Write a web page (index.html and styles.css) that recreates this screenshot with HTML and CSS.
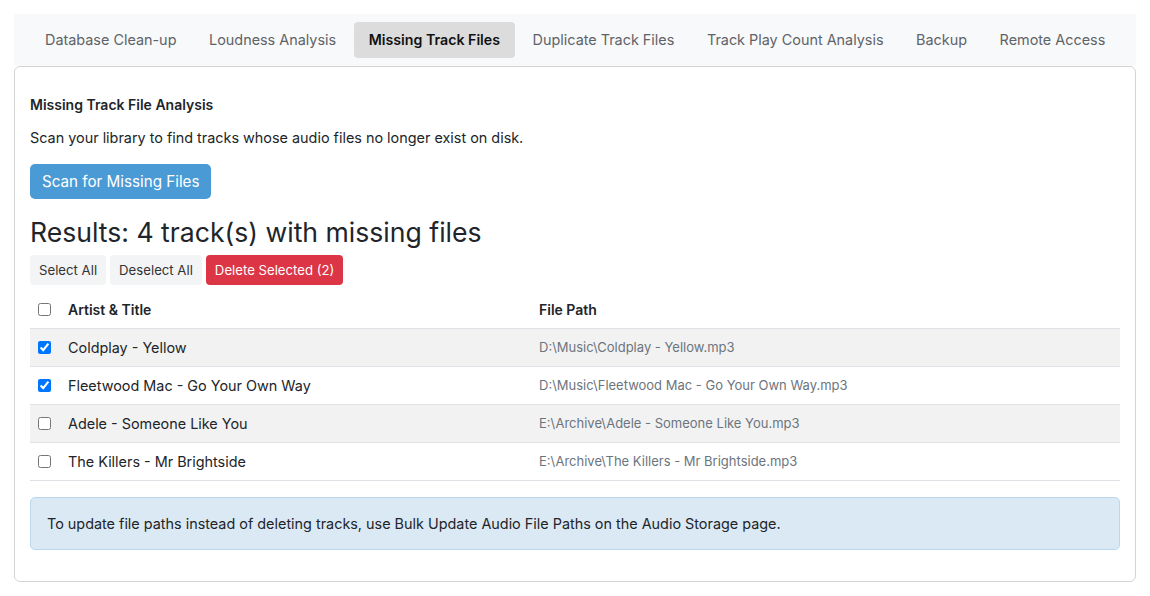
FILE: index.html
```html
<!DOCTYPE html>
<html>
<head>
  <title>Maintenance</title>
  <link rel="stylesheet" href="styles.css">
</head>
<body>
  <ul class="tabs">
    <li class="tab">Database Clean-up</li>
    <li class="tab">Loudness Analysis</li>
    <li class="tab active">Missing Track Files</li>
    <li class="tab">Duplicate Track Files</li>
    <li class="tab">Track Play Count Analysis</li>
    <li class="tab">Backup</li>
    <li class="tab">Remote Access</li>
  </ul>
  <div class="card">
    <h6 class="card-title">Missing Track File Analysis</h6>
    <p class="lead">Scan your library to find tracks whose audio files no longer exist on disk.</p>
    <button class="btn btn-scan" type="button">Scan for Missing Files</button>
    <h3 class="results">Results: 4 track(s) with missing files</h3>
    <div class="actions">
      <button class="btn-sm btn-light" type="button">Select All</button>
      <button class="btn-sm btn-light" type="button">Deselect All</button>
      <button class="btn-sm btn-danger" type="button">Delete Selected (2)</button>
    </div>
    <table class="tracks">
      <thead>
        <tr>
          <th class="col-check"><input type="checkbox"></th>
          <th class="col-title">Artist &amp; Title</th>
          <th>File Path</th>
        </tr>
      </thead>
      <tbody>
        <tr>
          <td class="col-check"><input type="checkbox" checked></td>
          <td>Coldplay - Yellow</td>
          <td class="path">D:\Music\Coldplay - Yellow.mp3</td>
        </tr>
        <tr>
          <td class="col-check"><input type="checkbox" checked></td>
          <td>Fleetwood Mac - Go Your Own Way</td>
          <td class="path">D:\Music\Fleetwood Mac - Go Your Own Way.mp3</td>
        </tr>
        <tr>
          <td class="col-check"><input type="checkbox"></td>
          <td>Adele - Someone Like You</td>
          <td class="path">E:\Archive\Adele - Someone Like You.mp3</td>
        </tr>
        <tr>
          <td class="col-check"><input type="checkbox"></td>
          <td>The Killers - Mr Brightside</td>
          <td class="path">E:\Archive\The Killers - Mr Brightside.mp3</td>
        </tr>
      </tbody>
    </table>
    <div class="alert">To update file paths instead of deleting tracks, use Bulk Update Audio File Paths on the Audio Storage page.</div>
  </div>
</body>
</html>
```

FILE: styles.css
```css
body {
  margin: 0;
  padding: 14px;
  background-color: #fff;
  color: #212529;
  font-family: Inter, "Noto Sans", sans-serif;
  font-size: 14.4px;
}

.tabs {
  display: flex;
  gap: 2.6px;
  list-style: none;
  margin: 0;
  padding: 8px 16px;
  background-color: #f8f9fa;
}

.tab {
  flex-shrink: 0;
  white-space: nowrap;
  padding: 8px 15px;
  font-size: 14.4px;
  line-height: 20px;
  color: #5f6368;
  border-radius: 4px;
}

.tab.active {
  background-color: #dcdcdc;
  color: #111;
  font-size: 14.2px;
  font-weight: 600;
}

.card {
  border: 1px solid #d4d4d4;
  border-radius: 6px;
  padding: 16px 15px 15px;
}

.card-title {
  margin: 12px 0 13px;
  font-size: 14px;
  font-weight: 600;
  line-height: 20px;
}

.lead {
  margin: 0 0 16px;
  font-size: 14.4px;
  line-height: 20px;
}

.btn {
  border: none;
  border-radius: 5px;
  font-family: inherit;
  font-size: 15.2px;
  padding: 8px 12px;
  line-height: 19px;
  cursor: pointer;
}

.btn-scan {
  background-color: #4a9bd5;
  color: #fff;
}

.results {
  margin: 15px 0 5px;
  font-size: 26.6px;
  font-weight: 400;
  line-height: 36px;
}

.actions {
  display: flex;
  gap: 4px;
}

.btn-sm {
  border: none;
  border-radius: 4px;
  font-family: inherit;
  font-size: 13.2px;
  padding: 6px 9px;
  line-height: 18px;
  cursor: pointer;
}

.btn-light {
  background-color: #f3f4f6;
  color: #333;
}

.btn-danger {
  background-color: #dc3545;
  color: #fff;
}

.tracks {
  width: 100%;
  border-collapse: collapse;
  margin-top: 5px;
}

.tracks th,
.tracks td {
  text-align: left;
  padding: 8px;
  line-height: 21px;
  border-bottom: 1px solid #dee2e6;
}

.tracks th {
  font-size: 14px;
  font-weight: 600;
  padding-top: 9px;
  padding-bottom: 8px;
}

.tracks tbody tr:nth-child(odd) {
  background-color: #f2f2f2;
}

.tracks .col-check {
  width: 14px;
}

.tracks .col-title {
  width: 455px;
}

.tracks input {
  margin: 0;
  width: 13px;
  height: 13px;
  vertical-align: -1px;
}

.tracks .path {
  font-size: 13px;
  color: #6c757d;
}

.alert {
  margin: 16px 0 16px;
  padding: 16px;
  background-color: #dbe9f5;
  border: 1px solid #b9d8ef;
  border-radius: 5px;
  font-size: 14.4px;
  line-height: 19px;
}
```
